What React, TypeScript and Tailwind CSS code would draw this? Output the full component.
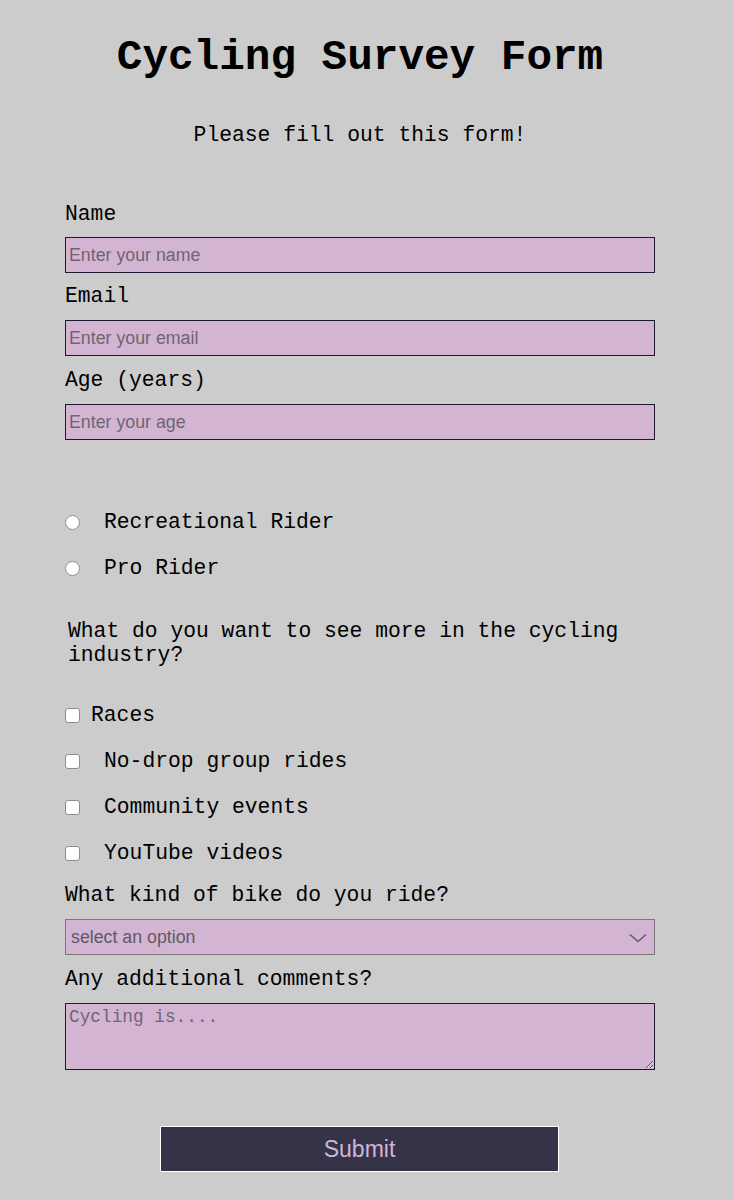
import React from 'react';

const mono = "font-['Liberation_Mono','Courier_New',monospace]";
const sans = "font-['Liberation_Sans',Arial,sans-serif]";

const field =
  'block w-[590px] h-[36px] bg-[#d3b5d3] border border-[#1c1a2e] px-[3px] text-[17.78px] text-black outline-none placeholder:text-[#6e6570]';

const box = 'h-[15px] w-[15px] shrink-0 appearance-none border border-[#8d8d8d] bg-white';

const options = [
  { label: 'Races', gap: 'ml-[11px]' },
  { label: 'No-drop group rides', gap: 'ml-[24px]' },
  { label: 'Community events', gap: 'ml-[24px]' },
  { label: 'YouTube videos', gap: 'ml-[24px]' },
];

export default function App() {
  return (
    <div className={`min-h-screen w-full bg-[#cccccc] text-black ${mono}`}>
      <div className="w-[720px] pt-[1px]">
        {/* Header */}
        <h1 className="pt-[34px] text-center text-[42.67px] font-bold leading-[46px]">
          Cycling Survey Form
        </h1>
        <p className="mt-[42px] text-center text-[21.33px] leading-[24px]">Please fill out this form!</p>

        <form className="pl-[65px] text-[21.33px] leading-[24px]" onSubmit={(e) => e.preventDefault()}>
          <label htmlFor="name" className="mt-[55px] block h-[24px]">Name</label>
          <input id="name" type="text" placeholder="Enter your name" className={`mt-[11px] ${field} ${sans}`} />

          <label htmlFor="email" className="mt-[11px] block h-[24px]">Email</label>
          <input id="email" type="email" placeholder="Enter your email" className={`mt-[12px] ${field} ${sans}`} />

          <label htmlFor="age" className="mt-[12px] block h-[24px]">Age (years)</label>
          <input id="age" type="number" placeholder="Enter your age" className={`mt-[12px] ${field} ${sans}`} />

          {/* Rider type */}
          <label className="mt-[70px] flex h-[24px] items-center">
            <input type="radio" name="rider" className={`${box} rounded-full`} />
            <span className="ml-[24px]">Recreational Rider</span>
          </label>
          <label className="mt-[22px] flex h-[24px] items-center">
            <input type="radio" name="rider" className={`${box} rounded-full`} />
            <span className="ml-[24px]">Pro Rider</span>
          </label>

          <p className="mt-[39px] w-[580px] pl-[3px]">What do you want to see more in the cycling industry?</p>

          {options.map((o, i) => (
            <label key={o.label} className={`${i === 0 ? 'mt-[36px]' : 'mt-[22px]'} flex h-[24px] items-center`}>
              <input type="checkbox" className={`${box} rounded-[3px]`} />
              <span className={o.gap}>{o.label}</span>
            </label>
          ))}

          <label htmlFor="bike" className="mt-[18px] block h-[24px]">What kind of bike do you ride?</label>
          <div className="relative mt-[12px] w-[590px]">
            <select
              id="bike"
              defaultValue=""
              className={`block h-[36px] w-[590px] appearance-none border border-[#7a7a7a] bg-[#d3b5d3] pl-[5px] text-[17.78px] text-[#5f5a60] outline-none ${sans}`}
            >
              <option value="" disabled>select an option</option>
              <option value="road">Road</option>
              <option value="gravel">Gravel</option>
              <option value="mtb">Mountain</option>
            </select>
            <svg
              className="pointer-events-none absolute right-[8px] top-[14px]"
              width="18"
              height="10"
              viewBox="0 0 18 10"
              fill="none"
            >
              <path d="M1 1.5 L9 8.5 L17 1.5" stroke="#606060" strokeWidth="1.6" />
            </svg>
          </div>

          <label htmlFor="comments" className="mt-[12px] block h-[24px]">Any additional comments?</label>
          <textarea
            id="comments"
            placeholder="Cycling is...."
            className="mt-[12px] block h-[67px] w-[590px] border border-[#1c1a2e] bg-[#d3b5d3] px-[3px] pt-[2px] text-[17.78px] leading-[22px] outline-none placeholder:text-[#6e6570]"
          />

          <div className="w-[590px] pt-[56px] pb-[28px]">
            <button
              type="submit"
              className={`ml-[95px] block h-[46px] w-[399px] border border-white bg-[#353347] text-[23px] text-[#d4b4d6] ${sans}`}
            >
              Submit
            </button>
          </div>
        </form>
      </div>
    </div>
  );
}
